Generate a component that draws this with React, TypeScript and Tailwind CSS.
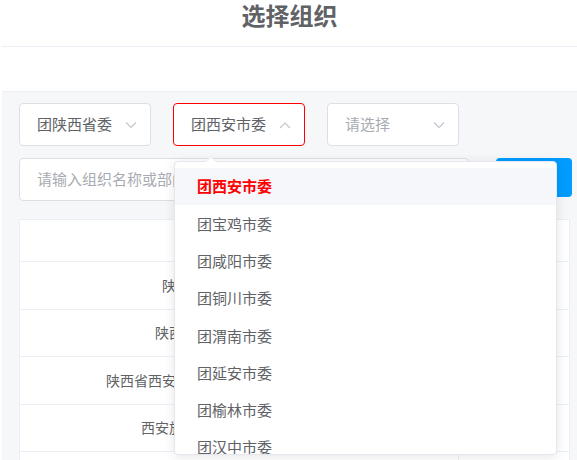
import { useState } from "react";

const FONT = { fontFamily: '"Noto Sans CJK SC", "Noto Sans", sans-serif' };

const CITIES = [
  "团西安市委",
  "团宝鸡市委",
  "团咸阳市委",
  "团铜川市委",
  "团渭南市委",
  "团延安市委",
  "团榆林市委",
  "团汉中市委",
  "团安康市委",
  "团商洛市委",
];

const ROWS = [
  "陕西省青年联合会组织部",
  "陕西省学生联合会秘书处部",
  "陕西省西安市共青团委员会青年发展研究部",
  "西安旅游职业学院团委组织部门",
  "西安市青少年宫团支部",
];

function Chevron({ up }: { up?: boolean }) {
  return (
    <svg width="12" height="8" viewBox="0 0 12 8" className="shrink-0">
      <polyline
        points={up ? "1,7 6,2 11,7" : "1,1.5 6,6.5 11,1.5"}
        fill="none"
        stroke="#c0c4cc"
        strokeWidth="1.1"
      />
    </svg>
  );
}

function SelectBox({
  value,
  placeholder,
  open,
}: {
  value?: string;
  placeholder?: string;
  open?: boolean;
}) {
  return (
    <div
      className={
        "flex h-[43px] w-[132px] items-center justify-between rounded-[4px] border bg-white pl-[17px] pr-[13px] " +
        (open ? "border-[#f00]" : "border-[#dcdfe6]")
      }
    >
      <span
        className={
          "text-[15px] " + (value ? "text-[#606266]" : "text-[#a8abb2]")
        }
      >
        {value ?? placeholder}
      </span>
      <Chevron up={open} />
    </div>
  );
}

export default function App() {
  const [active] = useState(0);

  return (
    <div
      className="relative h-[460px] w-[577px] overflow-hidden bg-white"
      style={FONT}
    >
      <div className="ml-[2px] flex h-[47px] justify-center border-b border-[#ebeef5] pt-px">
        <h1 className="text-[24px] font-bold leading-[28px] text-[#606266]">
          选择组织
        </h1>
      </div>

      <div className="h-[44px]" />

      <div className="ml-[2px] h-[370px] border-t border-[#eceef2] bg-[#f5f7f9] pl-[17px] pt-[11px]">
        <div className="flex gap-[22px]">
          <SelectBox value="团陕西省委" />
          <SelectBox value="团西安市委" open />
          <SelectBox placeholder="请选择" />
        </div>

        <div className="mt-[12px] flex items-start">
          <div className="flex h-[43px] w-[450px] items-center rounded-[4px] border border-[#dcdfe6] bg-white pl-[17px]">
            <span className="text-[15px] text-[#a8abb2]">
              请输入组织名称或部门名称
            </span>
          </div>
          <button className="ml-[27px] h-[39px] w-[76px] rounded-[4px] bg-[#009cff] text-[15px] text-white">
            搜索
          </button>
        </div>

        <div className="mt-[18px] w-[551px] border border-[#ebeef5] bg-white">
          <div className="flex h-[42px] border-b border-[#ebeef5] text-[14px] font-bold text-[#909399]">
            <div className="flex w-[439px] items-center justify-center border-r border-[#ebeef5]">
              组织名称
            </div>
            <div className="flex flex-1 items-center justify-center">操作</div>
          </div>
          {ROWS.map((name) => (
            <div
              key={name}
              className="flex h-[47.5px] border-b border-[#ebeef5] text-[14px] text-[#606266]"
            >
              <div className="flex w-[439px] items-center justify-center border-r border-[#ebeef5]">
                {name}
              </div>
              <div className="flex flex-1 items-center justify-center text-[#009cff]">
                选择
              </div>
            </div>
          ))}
        </div>
      </div>

      {/* dropdown popper */}
      <div className="absolute left-[174px] top-[161px] h-[294px] w-[383px] rounded-[4px] border border-[#e4e7ed] bg-white shadow-[0_2px_12px_0_rgba(0,0,0,0.1)]">
        <div className="absolute -top-[6px] left-[30px] h-0 w-0 border-x-[6px] border-b-[6px] border-x-transparent border-b-[#e4e7ed]" />
        <div className="absolute -top-[5px] left-[30px] h-0 w-0 border-x-[6px] border-b-[6px] border-x-transparent border-b-white" />
        <div className="h-full overflow-hidden pt-[6px]">
          {CITIES.map((c, i) => (
            <div
              key={c}
              className={
                "flex h-[37.3px] items-center pl-[22px] text-[15px] " +
                (i === active
                  ? "bg-[#f5f7fa] font-bold text-[#f00]"
                  : "text-[#606266]")
              }
            >
              {c}
            </div>
          ))}
        </div>
      </div>
    </div>
  );
}
